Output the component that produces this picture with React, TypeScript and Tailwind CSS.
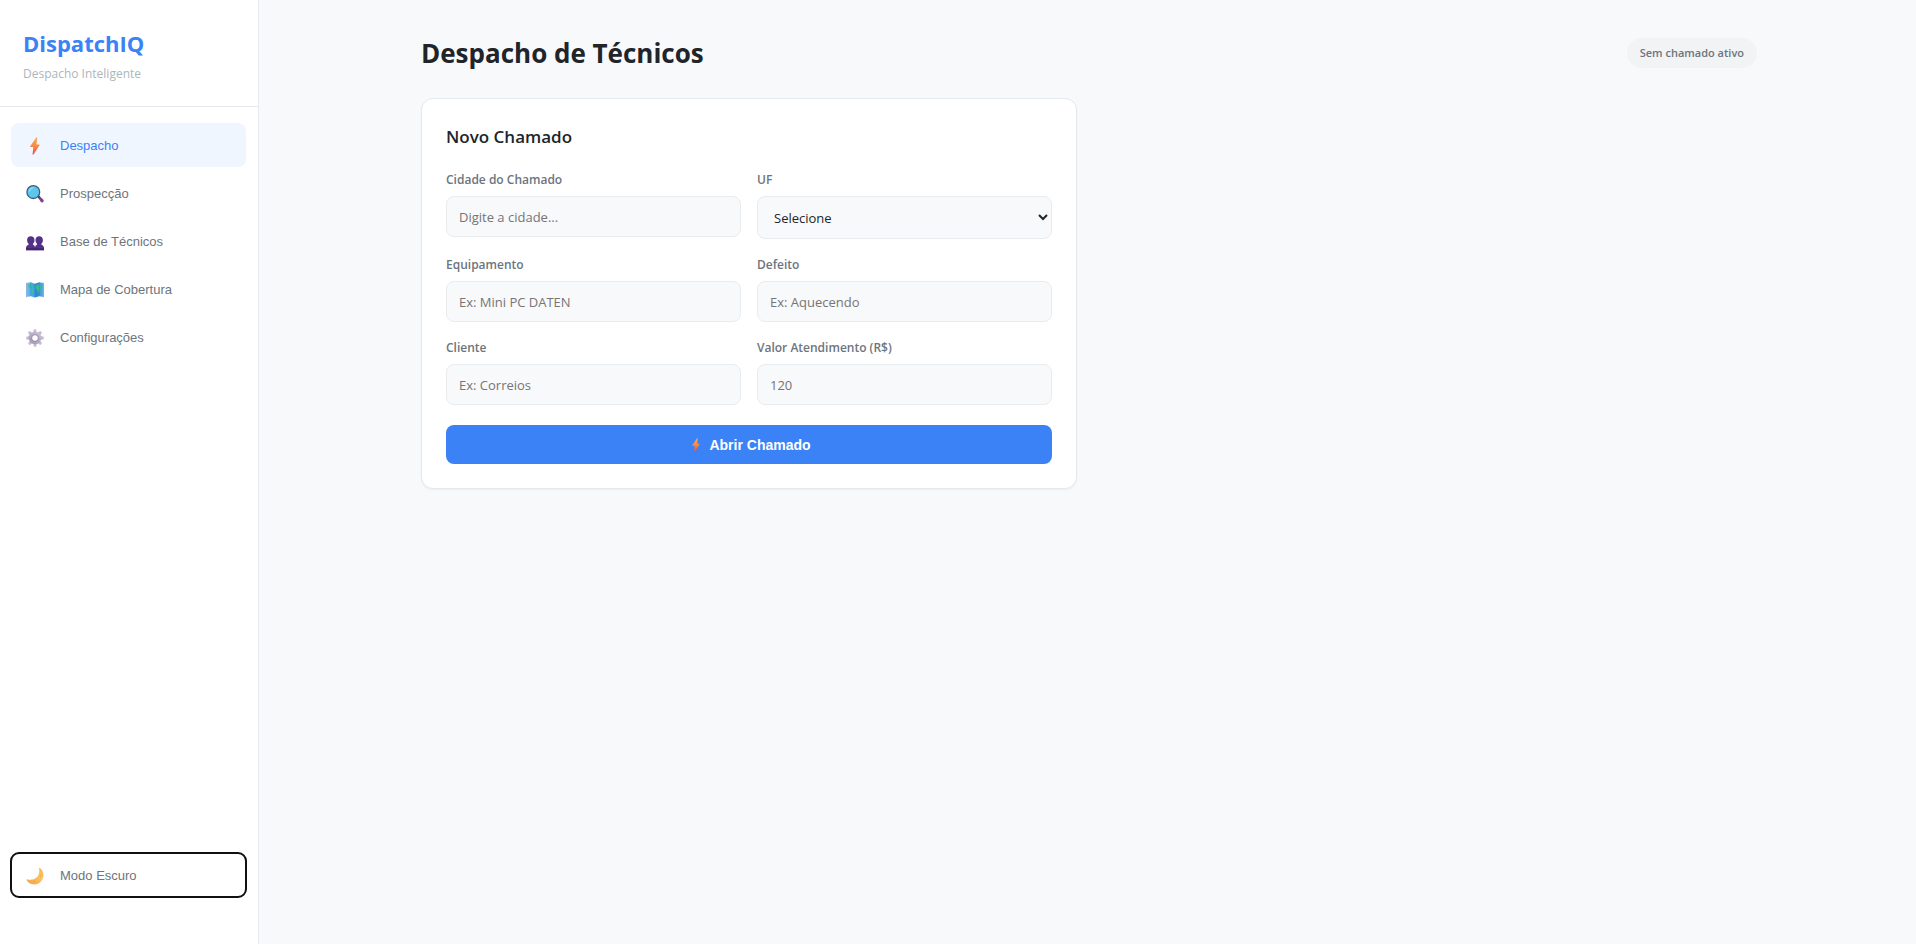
import { useId, type ReactNode } from 'react';

function BoltIcon({ className }: { className: string }) {
  const id = useId();
  return (
    <svg viewBox="0 0 18 18" className={className} aria-hidden="true">
      <defs>
        <linearGradient id={id} x1="0" y1="0" x2="0" y2="1">
          <stop offset="0" stopColor="#fbb04c" />
          <stop offset="0.5" stopColor="#f98a44" />
          <stop offset="1" stopColor="#e2504a" />
        </linearGradient>
      </defs>
      <path
        d="M10.200.6 4.200 9.200c-.3.5 0 .9.5.9h2.600L6.600 17.200c0 .6.6.7.9.3l6-9.200c.3-.5 0-.9-.5-.9h-2.600l.9-6.500c0-.6-.7-.8-1.100-.3Z"
        fill={`url(#${id})`}
      />
    </svg>
  );
}

function SearchIcon() {
  return (
    <svg viewBox="0 0 18 18" className="size-[18px]" aria-hidden="true">
      <path d="m11.2 11.6 1.5-1.3 4.5 4.2c1.4 1.6-.6 3.9-2.3 2.6Z" fill="#82458b" />
      <path d="m11.2 11.6 1.5-1.3 1.6 1.5-1.7 1.7Z" fill="#4b3a66" />
      <circle cx="7.3" cy="7.1" r="6.4" fill="#5cc7ea" stroke="#3b5f80" strokeWidth="1.3" />
      <path d="M3.4 6.4A4.2 4.2 0 0 1 7 2.9" fill="none" stroke="#8be0f5" strokeWidth="1.1" strokeLinecap="round" />
    </svg>
  );
}

function PeopleIcon() {
  return (
    <svg viewBox="0 0 18 18" className="size-[18px]" aria-hidden="true">
      <g fill="#533188">
        <path d="M4.800 3.200c2.300 0 3.700 1.400 3.700 3.700 0 1.800-.6 3-1.500 3.800v1c1.500.5 2.300 1.700 2.300 3.500v2H0v-2c0-1.900.9-3.100 2.600-3.500v-1c-.9-.8-1.500-2-1.500-3.800 0-2.300 1.400-3.700 3.700-3.700Z" />
        <path d="M13.200 3.200c2.300 0 3.700 1.400 3.700 3.700 0 1.800-.6 3-1.500 3.800v1c1.700.4 2.600 1.600 2.600 3.500v2H8.700v-2c0-1.800.8-3 2.300-3.500v-1c-.9-.8-1.500-2-1.500-3.800 0-2.300 1.400-3.700 3.700-3.700Z" />
      </g>
      <path d="m9 11 1 1.500-1 1.500-1-1.500Z" fill="#cfc4e2" />
      <path d="M0 15.200h18v2H0Z" fill="#432470" />
    </svg>
  );
}

function MapIcon() {
  const id = useId();
  return (
    <svg viewBox="0 0 18 18" className="size-[18px]" aria-hidden="true">
      <defs>
        <linearGradient id={id} x1="0" y1="0" x2="1" y2="0">
          <stop offset="0" stopColor="#6cc3ec" />
          <stop offset="0.45" stopColor="#3f9fe0" />
          <stop offset="0.6" stopColor="#2f83cd" />
          <stop offset="1" stopColor="#63aee6" />
        </linearGradient>
      </defs>
      <path d="M0 2.300 1 1.600v14L0 16.800Z M18 2.300l-1-.7v14l1 1.200Z" fill="#a9a3d3" />
      <path d="m.6 2 4.200-.7L9 2.700l4.200-1.400 4.200.7v14l-4.200-.8L9 16.500l-4.200-1.300-4.200.8Z" fill={`url(#${id})`} />
      <path d="m2.200 3.700 3.600-.4 1.800 2-1.700.7-.8 1.800-2-.9Z" fill="#37c195" />
      <path d="m5.600 8.300 1.900 1.100-.8 3.300-1.200.4-.7-3Z" fill="#37c195" />
      <path d="m9.700 4.700 3.400-1.300 3.200 1.100-.4 3-2 .4-.8 3-1.400.5-.7-2.800-1.500-.8Z" fill="#35bd8e" />
      <path d="m14 11.500 1.800.3-.3 1.700-1.600-.5Z" fill="#37c195" />
      <path d="M4.800 1.300v13.900M9 2.700v13.800M13.200 1.300v13.900" stroke="#2774bd" strokeWidth=".5" opacity=".6" />
    </svg>
  );
}

const teeth = [0, 45, 90, 135, 180, 225, 270, 315];

function GearIcon() {
  const id = useId();
  return (
    <svg viewBox="0 0 18 18" className="size-[18px]" aria-hidden="true">
      <defs>
        <linearGradient id={id} gradientUnits="userSpaceOnUse" x1="14" y1="2" x2="4" y2="16">
          <stop offset="0" stopColor="#cdc5d6" />
          <stop offset="1" stopColor="#9f91b5" />
        </linearGradient>
      </defs>
      <g fill={`url(#${id})`}>
        {teeth.map((angle) => (
          <path key={angle} d="M7.600.9c0-.4.300-.7.700-.7h1.400c.4 0 .7.3.7.7l.5 3.300H7.100Z" transform={`rotate(${angle} 9 9)`} />
        ))}
        <path
          fillRule="evenodd"
          d="M9 2.800a6.200 6.200 0 1 1 0 12.400A6.200 6.200 0 0 1 9 2.800Zm0 3.200a3 3 0 1 0 0 6 3 3 0 0 0 0-6Z"
        />
      </g>
      <circle cx="9" cy="9" r="3.400" fill="none" stroke="#9387a6" strokeWidth=".8" />
    </svg>
  );
}

function MoonIcon() {
  const id = useId();
  return (
    <svg viewBox="0 0 18 18" className="size-[18px]" aria-hidden="true">
      <defs>
        <linearGradient id={id} x1="0" y1="1" x2="1" y2="0">
          <stop offset="0" stopColor="#f3a04b" />
          <stop offset="0.6" stopColor="#fbc35d" />
          <stop offset="1" stopColor="#f6b25a" />
        </linearGradient>
      </defs>
      <path
        d="M14 .9c3.400 2.900 4.400 7.500 2.500 11.300-2 4.300-6.700 6.300-11 4.900C3.300 16.400 1.600 15 .7 13.200c-.3-.6.200-1 .8-.8 3.300.9 6.900.3 9.300-2.100 2.300-2.300 2.900-5.700 2.300-8.900-.1-.6.500-.9.900-.5Z"
        fill={`url(#${id})`}
      />
      <circle cx="8.500" cy="14.600" r=".9" fill="#eda04a" />
      <circle cx="14.600" cy="9" r=".8" fill="#f0a850" />
    </svg>
  );
}

const navItems = [
  { label: 'Despacho', icon: <BoltIcon className="size-[18px]" />, active: true },
  { label: 'Prospecção', icon: <SearchIcon />, active: false },
  { label: 'Base de Técnicos', icon: <PeopleIcon />, active: false },
  { label: 'Mapa de Cobertura', icon: <MapIcon />, active: false },
  { label: 'Configurações', icon: <GearIcon />, active: false },
];

function NavButton({ icon, label, className }: { icon: ReactNode; label: string; className: string }) {
  return (
    <button
      type="button"
      className={`flex h-11 w-full items-center gap-[13px] rounded-lg px-3 pt-0.5 text-left font-['Liberation_Sans',Arial,sans-serif] text-[13px] ${className}`}
    >
      <span className="flex w-6 justify-center">{icon}</span>
      {label}
    </button>
  );
}

const control =
  'w-full rounded-lg border border-[#e9ecef] bg-[#f8f9fb] text-[13px] leading-[19px] text-[#212529] placeholder:text-[#757575]';

function Field({ id, label, children }: { id: string; label: string; children: ReactNode }) {
  return (
    <div>
      <label htmlFor={id} className="mb-1.5 block text-xs leading-5 font-semibold text-[#6c757d]">
        {label}
      </label>
      {children}
    </div>
  );
}

function TextField({ id, label, placeholder, type = 'text' }: { id: string; label: string; placeholder: string; type?: string }) {
  return (
    <Field id={id} label={label}>
      <input id={id} type={type} placeholder={placeholder} className={`${control} h-[41px] px-3`} />
    </Field>
  );
}

export default function App() {
  return (
    <div className="flex min-h-screen bg-[#f8f9fb] font-['Open_Sans','Noto_Sans',sans-serif] text-[#212529]">
      <aside className="flex w-[259px] shrink-0 flex-col border-r border-[#e5e8ec] bg-white">
        <div className="border-b border-[#e5e8ec] pt-[25px] pb-[23px] pl-[23px]">
          <p className="text-[22px] leading-9 font-bold text-[#3b82f6]">DispatchIQ</p>
          <p className="mt-1 text-xs leading-[18px] text-[#adb5bd]">Despacho Inteligente</p>
        </div>
        <nav className="flex flex-1 flex-col gap-1 pt-4 pr-3 pl-[11px]">
          {navItems.map((item) => (
            <NavButton
              key={item.label}
              icon={item.icon}
              label={item.label}
              className={item.active ? 'bg-[#eff6ff] text-[#3b82f6]' : 'text-[#6c757d]'}
            />
          ))}
        </nav>
        <div className="pr-3 pb-[47px] pl-[11px]">
          <NavButton
            icon={<MoonIcon />}
            label="Modo Escuro"
            className="text-[#6c757d] outline-2 -outline-offset-1 outline-[#101010]"
          />
        </div>
      </aside>

      <main className="min-w-0 flex-1 py-8 pr-8 pl-[35px]">
        <div className="mx-auto max-w-[1336px]">
          <header className="mb-6 flex items-center justify-between">
            <h1 className="text-[26px] leading-[42px] font-bold">Despacho de Técnicos</h1>
            <span className="rounded-full bg-[#f1f3f5] px-[13px] py-1.5 text-[11px] leading-[18px] font-semibold text-[#6c757d]">
              Sem chamado ativo
            </span>
          </header>

          <div className="grid grid-cols-2 gap-6">
            <section className="rounded-xl border border-[#e5e8ec] bg-white p-6 shadow-[0_1px_2px_rgba(0,0,0,0.05)]">
              <h2 className="mb-5 text-[17px] leading-[27px] font-semibold">Novo Chamado</h2>
              <form onSubmit={(event) => event.preventDefault()}>
                <div className="grid grid-cols-2 gap-4">
                  <TextField id="cidade" label="Cidade do Chamado" placeholder="Digite a cidade..." />
                  <Field id="uf" label="UF">
                    <select id="uf" className={`${control} h-[43px] pl-3`}>
                      <option>Selecione</option>
                      <option>MG</option>
                      <option>RJ</option>
                      <option>SP</option>
                    </select>
                  </Field>
                  <TextField id="equipamento" label="Equipamento" placeholder="Ex: Mini PC DATEN" />
                  <TextField id="defeito" label="Defeito" placeholder="Ex: Aquecendo" />
                  <TextField id="cliente" label="Cliente" placeholder="Ex: Correios" />
                  <TextField id="valor" label="Valor Atendimento (R$)" placeholder="120" type="number" />
                </div>
                <button
                  type="submit"
                  className="mt-5 flex h-[39px] w-full items-center justify-center gap-1.5 rounded-lg bg-[#3b82f6] pl-0.5 font-['Liberation_Sans',Arial,sans-serif] text-sm font-bold text-white"
                >
                  <BoltIcon className="size-3.5" />
                  Abrir Chamado
                </button>
              </form>
            </section>
          </div>
        </div>
      </main>
    </div>
  );
}
